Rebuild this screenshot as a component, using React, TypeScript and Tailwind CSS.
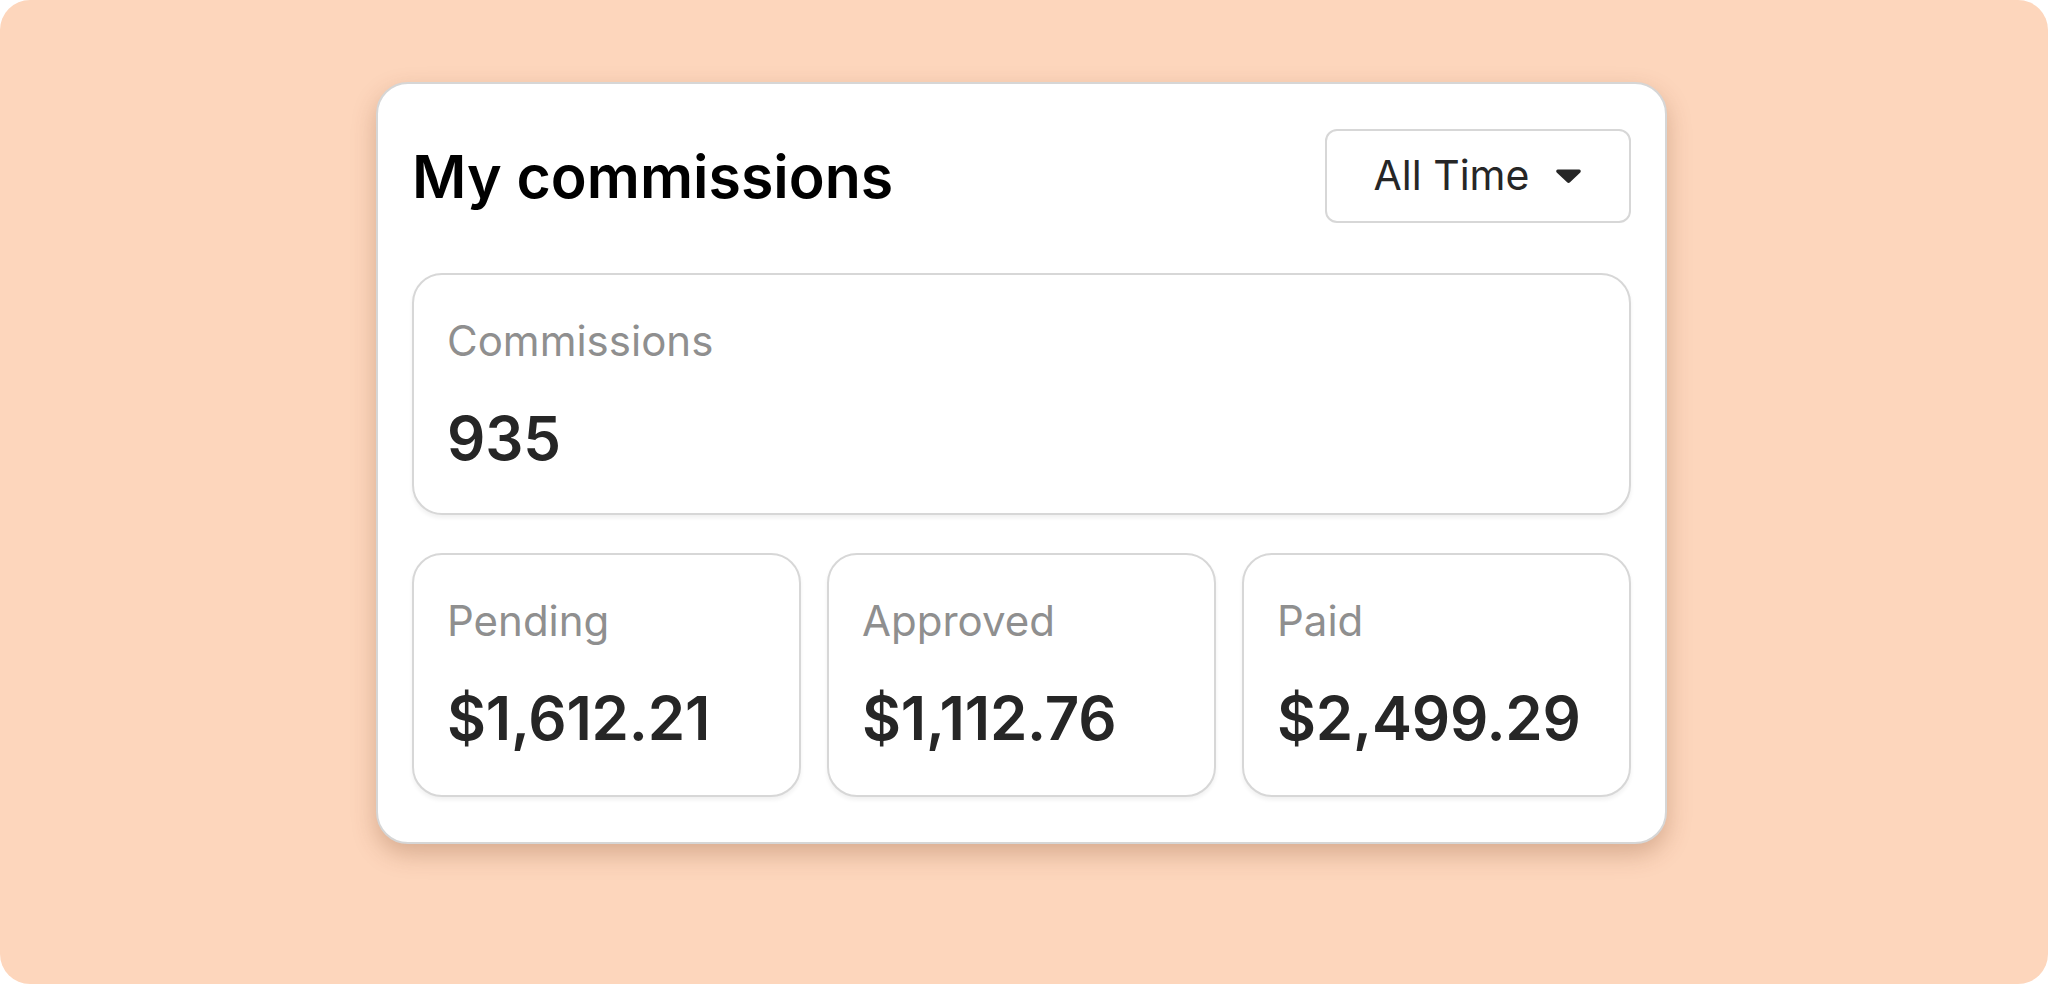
import React from 'react';

const stats = [
  { label: 'Pending', value: '$1,612.21' },
  { label: 'Approved', value: '$1,112.76' },
  { label: 'Paid', value: '$2,499.29' },
];

const StatBox = ({ label, value, className = '' }: { label: string; value: string; className?: string }) => (
  <div
    className={`rounded-[30px] border-2 border-[#d7d7d7] bg-white pl-[33px] pt-[41px] shadow-[0_3px_4px_rgba(0,0,0,0.06)] ${className}`}
  >
    <div className="text-[42px] leading-[1.2] font-normal text-[#8f8f8f]">{label}</div>
    <div className="mt-[36px] text-[60px] leading-[1.2] font-semibold tracking-[-0.2px] text-[#262626]">{value}</div>
  </div>
);

const App = () => {
  return (
    <div className="h-[984px] w-[2048px] bg-white font-['Inter','Noto_Sans',sans-serif]">
      <div className="flex h-full w-full rounded-[30px] bg-[#fdd6bc] pl-[376px] pt-[82px]">
        <div className="h-[762px] w-[1291px] rounded-[32px] border-2 border-[#d6d6d6] bg-white px-[34px] py-[45px] shadow-[0_10px_24px_rgba(120,60,30,0.28)]">
          {/* Header */}
          <div className="flex h-[94px] items-center justify-between">
            <h1 className="text-[59px] font-semibold leading-none text-black">My commissions</h1>
            <button className="flex h-[94px] w-[306px] items-center justify-center gap-[26px] rounded-[12px] border-2 border-[#d7d7d7] bg-white text-[41px] text-[#262626]">
              <span>All Time</span>
              <svg width="27" height="16" viewBox="0 0 27 16">
                <path
                  d="M3 1.5h21c1.6 0 2.4 1.9 1.3 3L15 14.3c-.8.8-2.1.8-2.9 0L1.7 4.5C.6 3.4 1.4 1.5 3 1.5z"
                  fill="#262626"
                />
              </svg>
            </button>
          </div>

          {/* Total */}
          <StatBox label="Commissions" value="935" className="mt-[50px] h-[242px]" />

          {/* Breakdown */}
          <div className="mt-[38px] grid grid-cols-3 gap-[26px]">
            {stats.map((s) => (
              <StatBox key={s.label} label={s.label} value={s.value} className="h-[244px]" />
            ))}
          </div>
        </div>
      </div>
    </div>
  );
};

export default App;
